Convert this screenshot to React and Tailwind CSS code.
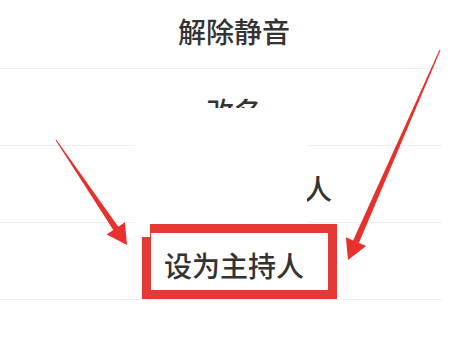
const rows = [
  { label: "改名" },
  { label: "设为联席主持人" },
  { label: "设为主持人" },
];

function Arrows() {
  return (
    <svg
      className="absolute inset-0 pointer-events-none"
      width="456"
      height="358"
      viewBox="0 0 456 358"
    >
      <polygon
        fill="#e8302c"
        points="55.6,140.3 113.3,230.1 106.7,234.6 127,245 124.9,222.2 118.3,226.7 56.4,139.7"
      />
      <polygon
        fill="#e8302c"
        points="439.5,49.8 353.1,240.4 345.9,237.3 348,260 366.1,246.1 358.9,243 440.5,50.2"
      />
    </svg>
  );
}

export default function App() {
  return (
    <div
      className="relative w-[456px] h-[358px] overflow-hidden bg-white text-[#333333]"
      style={{ fontFamily: '"Noto Sans CJK SC", "Noto Sans", sans-serif' }}
    >
      <div className="w-[442px] flex flex-col">
        <div className="h-[68px] flex items-center justify-center pl-[26px] pb-[6px] text-[28px] font-medium leading-none">
          解除静音
        </div>
        {rows.map((row) => (
          <div
            key={row.label}
            className="h-[77px] border-t border-[#efefef] flex items-center justify-center pl-[26px] pt-[7px] text-[28px] font-medium leading-none"
          >
            {row.label}
          </div>
        ))}
        <div className="border-t border-[#efefef]" />
      </div>

      {/* cover over part of the menu */}
      <div className="absolute left-[135px] top-[108px] w-[172px] h-[116px] bg-white" />

      {/* red highlight box */}
      <div className="absolute left-[142px] top-[224px] w-[195px] h-[75px] border-[9px] border-[#e53935]" />
      <div className="absolute left-[142px] top-[224px] w-[8px] h-[13px] bg-white" />

      <Arrows />
    </div>
  );
}
